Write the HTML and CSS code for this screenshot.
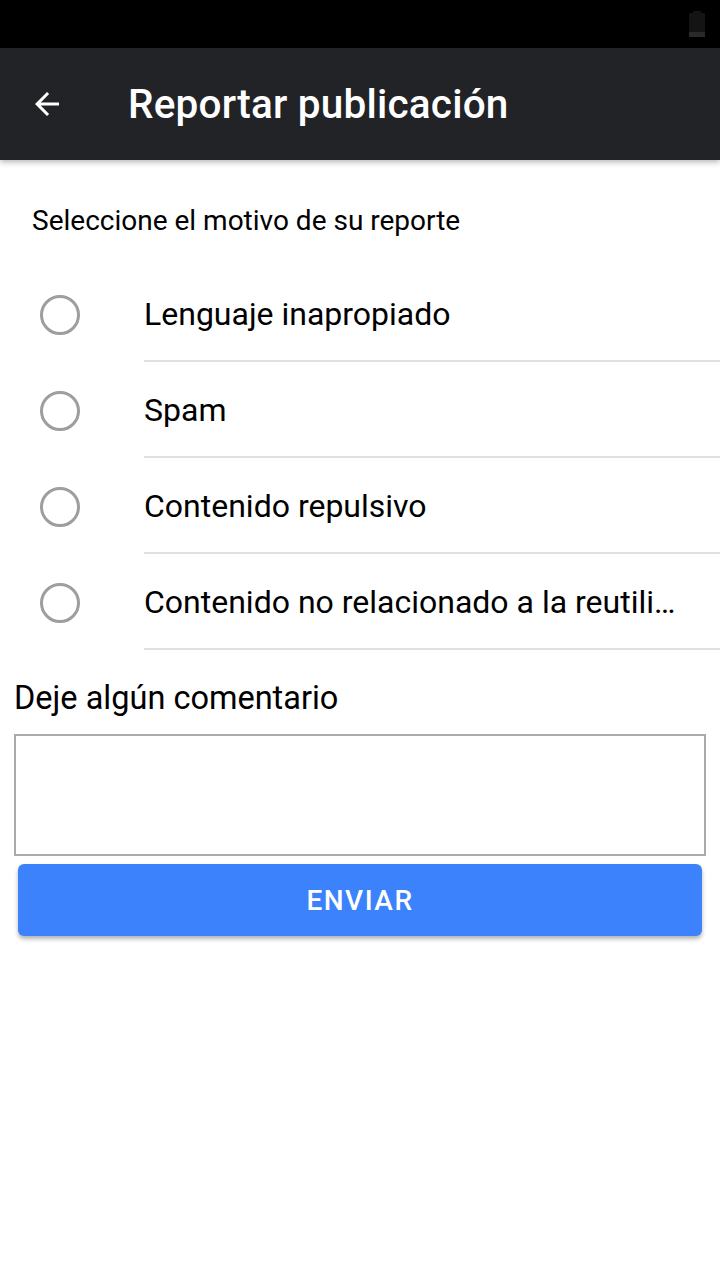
FILE: index.html
```html
<!DOCTYPE html>
<html lang="es">
<head>
<meta charset="utf-8">
<link rel="stylesheet" href="styles.css">
</head>
<body>
<div class="status">
  <svg class="battery" width="18" height="26" viewBox="0 0 18 26"><rect x="5" y="0" width="8" height="3" fill="#141414"/><rect x="1" y="2" width="16" height="24" rx="1" fill="#141414"/><rect x="1" y="21" width="16" height="5" fill="#2a2a2a"/></svg>
</div>
<header class="appbar">
  <svg class="back" width="36" height="36" viewBox="0 0 24 24"><path d="M20 11H7.83l5.59-5.59L12 4l-8 8 8 8 1.41-1.41L7.83 13H20v-2z" fill="#fff"/></svg>
  <h1 class="title">Reportar publicación</h1>
</header>
<main class="content">
  <p class="prompt">Seleccione el motivo de su reporte</p>
  <ul class="options">
    <li class="option"><span class="radio"></span><span class="label">Lenguaje inapropiado</span></li>
    <li class="option"><span class="radio"></span><span class="label">Spam</span></li>
    <li class="option"><span class="radio"></span><span class="label">Contenido repulsivo</span></li>
    <li class="option"><span class="radio"></span><span class="label">Contenido no relacionado a la reutilización de materiales</span></li>
  </ul>
  <p class="comment-label">Deje algún comentario</p>
  <div class="textbox"></div>
  <button class="send">ENVIAR</button>
</main>
</body>
</html>
```
FILE: styles.css
```css
* { box-sizing: border-box; }
html, body { margin: 0; padding: 0; background: #fff; }
body { width: 720px; height: 1280px; font-family: Roboto, "Noto Sans", sans-serif; color: #000; overflow: hidden; }
.status { height: 48px; background: #000; display: flex; justify-content: flex-end; align-items: center; padding-right: 14px; }
.appbar { height: 112px; background: #222327; display: flex; align-items: center; box-shadow: 0 2px 6px rgba(0,0,0,0.3); position: relative; }
.back { margin-left: 29px; }
.title { margin: 0 0 0 63px; color: #fff; font-size: 40.5px; font-weight: 500; letter-spacing: 0.2px; }
.content { display: flex; flex-direction: column; }
.prompt { margin: 42px 0 0 32px; font-size: 28px; line-height: 38px; height: 38px; }
.options { list-style: none; margin: 26px 0 0 0; padding: 0; }
.option { height: 96px; display: flex; align-items: center; position: relative; }
.option::after { content: ""; position: absolute; left: 144px; right: 0; bottom: 0; height: 2px; background: #e0e0e0; }
.radio { width: 40px; height: 40px; border: 3px solid #9e9e9e; border-radius: 50%; margin-left: 40px; flex: none; margin-top: 1px; }
.label { margin-left: 64px; font-size: 32px; white-space: nowrap; overflow: hidden; text-overflow: ellipsis; padding-right: 44px; margin-top: 0; }
.comment-label { margin: 29px 0 0 14px; font-size: 32.5px; line-height: 38px; letter-spacing: 0; }
.textbox { margin: 17px 14px 0 14px; height: 122px; border: 2px solid #aaa; }
.send { margin: 8px 18px 0 18px; height: 72px; border: none; border-radius: 6px; background: #3b82fc; color: #fff; font-family: Roboto, sans-serif; font-size: 28px; font-weight: 500; letter-spacing: 1.5px; box-shadow: 0 3px 4px rgba(0,0,0,0.3); }
```
